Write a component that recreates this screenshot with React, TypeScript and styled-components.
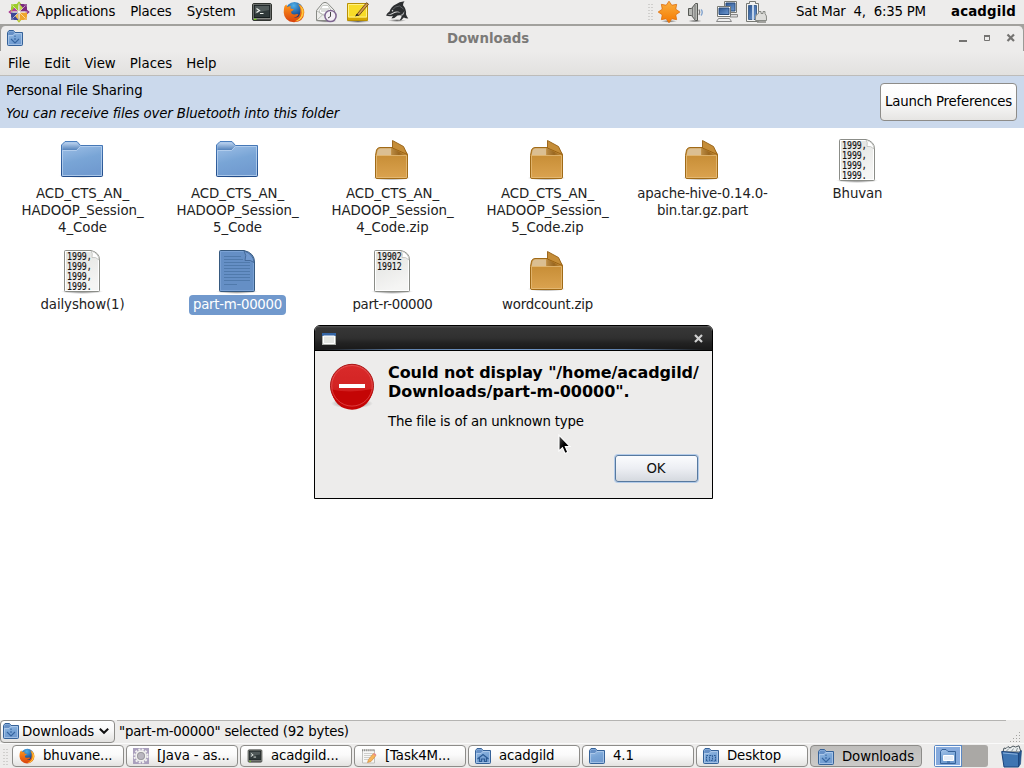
import React from "react";
import styled, { createGlobalStyle, css } from "styled-components";

const Global = createGlobalStyle`
  * { box-sizing: border-box; }
  html, body { margin: 0; padding: 0; }
  body {
    font-family: "DejaVu Sans", sans-serif;
    font-size: 13.33px;
    color: #1a1a1a;
    overflow: hidden;
    background: #fff;
  }
  svg { display: block; flex: none; overflow: visible; }
`;

const Desktop = styled.div`
  position: relative;
  width: 1024px;
  height: 768px;
  display: flex;
  flex-direction: column;
  overflow: hidden;
  background: #fff;
  cursor: default;
  white-space: nowrap;
`;

const Text = styled.span<{ $sp?: number; $bold?: boolean; $italic?: boolean }>`
  display: block;
  white-space: pre;
  letter-spacing: ${(p) => p.$sp ?? 0}px;
  font-weight: ${(p) => (p.$bold ? 700 : 400)};
  font-style: ${(p) => (p.$italic ? "italic" : "normal")};
`;

/* top panel */
const TopPanel = styled.header`
  display: flex;
  justify-content: space-between;
  height: 26px;
  flex: none;
  background: #edeceb;
  border-bottom: 2px solid #a2a19d;
  line-height: 23px;
  color: #000;
`;
const PanelLeft = styled.div`
  display: flex;
  align-items: flex-start;
  padding-left: 8px;
  svg { margin-top: 1px; }
`;
const PanelMenu = styled.nav`
  display: flex;
  gap: 15px;
  padding-left: 6px;
  width: 207px;
`;
const Launchers = styled.div`
  display: flex;
  gap: 10px;
  padding-left: 14px;
`;
const PanelRight = styled.div`
  display: flex;
  padding-right: 8px;
`;
const Tray = styled.div`
  display: flex;
  gap: 7px;
  padding: 1px 0 0 4px;
  width: 142px;
`;
const Clock = styled.div`
  width: 155px;
`;
const User = styled.div`
  width: 65px;
`;

/* file manager window */
const TitleWrap = styled.div`
  background: #a2a19d;
  flex: none;
`;
const TitleBar = styled.div`
  display: flex;
  align-items: center;
  height: 25px;
  padding: 0 7px 1px 6px;
  background: #edeceb;
  border: 1px solid #9b9a97;
  border-width: 0 1px;
  border-radius: 5px 5px 0 0;
`;
const Title = styled.div`
  flex: 1;
  text-align: center;
  color: #7b7a78;
  font-weight: 700;
  padding: 1px 3px 0 0;
`;
const MenuBar = styled.nav`
  display: flex;
  gap: 14px;
  height: 25px;
  flex: none;
  padding-left: 8px;
  line-height: 25px;
  color: #000;
  background: linear-gradient(#edeceb, #e2e1df);
  border-bottom: 1px solid #bdbcba;
`;
const InfoBar = styled.section`
  display: flex;
  justify-content: space-between;
  height: 52px;
  flex: none;
  padding: 3px 7px 0 6px;
  background: #cbd9ec;
  color: #000;
`;
const InfoText = styled.div`
  line-height: 23px;
`;
const PrefButton = styled.button`
  width: 137px;
  height: 38px;
  margin-top: 4px;
  padding: 0 0 2px;
  display: flex;
  align-items: center;
  justify-content: center;
  font: inherit;
  color: #000;
  border: 1px solid #8d8c89;
  border-radius: 4px;
  background: linear-gradient(#ffffff, #fbfbfb 45%, #e6e5e3);
`;

const Files = styled.main`
  flex: 1;
  display: grid;
  grid-template-columns: repeat(6, 155px);
  grid-auto-rows: 111px;
  padding: 9px 0 0 5px;
`;
const File = styled.figure`
  margin: 0;
  display: flex;
  flex-direction: column;
  align-items: center;
  svg { margin-right: 1px; }
`;
const Label = styled.figcaption<{ $selected?: boolean }>`
  text-align: center;
  line-height: 17px;
  color: #222;
  ${(p) =>
    p.$selected &&
    css`
      width: 97px;
      height: 20px;
      display: flex;
      justify-content: center;
      margin: -1px 0 0;
      line-height: 19px;
      border-radius: 4px;
      background: #7199cd;
      color: #fff;
    `}
`;

const StatusBar = styled.footer`
  display: flex;
  height: 23px;
  flex: none;
  background: #edeceb;
  line-height: 21px;
  color: #000;
`;
const PathCombo = styled.div`
  width: 115px;
  height: 23px;
  display: flex;
  align-items: center;
  padding: 0 0 1px 2px;
  border: 1px solid #8d8c89;
  border-radius: 4px;
  background: linear-gradient(#fff, #f8f8f8 45%, #e2e1df);
`;
const ComboLabel = styled.div`
  width: 80px;
  padding-left: 3px;
`;
const StatusText = styled.div`
  width: 889px;
  margin-left: 2px;
  padding-left: 2px;
  border-top: 1px solid #b5b4b2;
`;
const Corner = styled.div`
  padding-left: 4px;
`;
const TaskBar = styled.footer`
  display: flex;
  height: 25px;
  flex: none;
  padding: 1px 0 0 3px;
  background: #edeceb;
  border-top: 1px solid #fafafa;
  color: #000;
`;
const Tasks = styled.div`
  display: flex;
  gap: 2px;
  margin-left: 3px;
`;
const Task = styled.div<{ $active?: boolean }>`
  width: 112px;
  height: 22px;
  display: flex;
  align-items: center;
  gap: 8px;
  padding: ${(p) => (p.$active ? "1px 0 0 7px" : "0 0 1px 6px")};
  border: 1px solid #8d8c89;
  border-radius: 4px;
  background: ${(p) =>
    p.$active
      ? "linear-gradient(#bfbebc, #cbcac8)"
      : "linear-gradient(#ffffff, #fafafa 45%, #e4e3e1)"};
`;
const Pager = styled.div`
  display: flex;
  width: 54px;
  height: 22px;
  margin: 0 13px 0 12px;
  border-radius: 3px;
  overflow: hidden;
  background: #aaa8a5;
`;
const ActiveSpace = styled.div`
  width: 28px;
  display: flex;
  align-items: center;
  justify-content: center;
  background: #86aadc;
  border: 1px solid #5b88c4;
  box-shadow: inset 0 0 0 1px #f4f8fd;
`;

/* error dialog */
const Dialog = styled.div`
  position: absolute;
  left: 314px;
  top: 325px;
  width: 399px;
  height: 174px;
  border: 1px solid #000;
  border-radius: 6px 6px 0 0;
  background: #edeceb;
  overflow: hidden;
`;
const DialogTitle = styled.div`
  height: 25px;
  display: flex;
  align-items: center;
  justify-content: space-between;
  padding: 1px 9px 0 7px;
  background:
    linear-gradient(90deg, #1b1b1b 2%, #5f81ab 22%, #7096c6 50%, #5f81ab 78%, #1b1b1b 98%) 0 23px / 100% 1px no-repeat,
    linear-gradient(#555 0, #363636 2px, #303030 12px, #222 17px, #191919);
  border-bottom: 1px solid #000;
`;
const DialogBody = styled.div`
  display: flex;
  padding: 13px 0 0 14px;
  color: #000;
`;
const DialogMessage = styled.div`
  padding-left: 13px;
`;
const DialogHeading = styled.h1`
  margin: -1px 0 0;
  font-size: 16px;
  line-height: 19px;
`;
const DialogDetail = styled.p`
  margin: 13px 0 0;
  line-height: 16px;
`;
const DialogActions = styled.div`
  display: flex;
  justify-content: flex-end;
  padding: 25px 14px 0 0;
`;
const OkButton = styled.button`
  width: 83px;
  height: 27px;
  padding: 0 1px 1px 0;
  font: inherit;
  color: #111;
  border: 1px solid #57799f;
  border-radius: 3px;
  box-shadow: 0 0 0 1px #b3cbe9;
  background: linear-gradient(#fbfcfe, #eceef3 50%, #d5d9df);
`;
const Pointer = styled.div`
  position: absolute;
  left: 558px;
  top: 434px;
`;

/* ---------- drawings ---------- */

const SharedDefs = () => (
  <svg width="0" height="0" style={{ position: "absolute" }} aria-hidden>
    <defs>
      <linearGradient id="folder" x1="0" y1="0" x2="0.3" y2="1">
        <stop offset="0" stopColor="#a6c5ea" />
        <stop offset="0.6" stopColor="#79a5d6" />
        <stop offset="1" stopColor="#719bd0" />
      </linearGradient>
      <linearGradient id="tab" x1="0" y1="0" x2="0" y2="1">
        <stop offset="0" stopColor="#bcd3ef" />
        <stop offset="1" stopColor="#5583bb" />
      </linearGradient>
      <linearGradient id="edge" x1="0" y1="0" x2="0" y2="1">
        <stop offset="0" stopColor="#4b7ebd" />
        <stop offset="1" stopColor="#214c8a" />
      </linearGradient>
      <linearGradient id="box" x1="0" y1="0" x2="0" y2="1">
        <stop offset="0" stopColor="#c1872e" />
        <stop offset="1" stopColor="#dba350" />
      </linearGradient>
      <linearGradient id="hollow" x1="0" y1="0" x2="1" y2="0">
        <stop offset="0" stopColor="#b98a43" />
        <stop offset="0.5" stopColor="#9a6720" />
        <stop offset="1" stopColor="#c58d38" />
      </linearGradient>
      <linearGradient id="paper" x1="0" y1="0" x2="0.4" y2="1">
        <stop offset="0" stopColor="#dfe0dd" />
        <stop offset="1" stopColor="#f5f5f4" />
      </linearGradient>
      <linearGradient id="fox" x1="0" y1="0" x2="0" y2="1">
        <stop offset="0" stopColor="#ff9a1c" />
        <stop offset="1" stopColor="#d8400c" />
      </linearGradient>
      <radialGradient id="globe" cx="0.45" cy="0.2" r="0.7">
        <stop offset="0" stopColor="#4db0ea" />
        <stop offset="1" stopColor="#0c2f78" />
      </radialGradient>
      <linearGradient id="sun" x1="0" y1="0" x2="0" y2="1">
        <stop offset="0" stopColor="#fbb040" />
        <stop offset="1" stopColor="#f57900" />
      </linearGradient>
      <linearGradient id="screen" x1="0" y1="0" x2="1" y2="1">
        <stop offset="0" stopColor="#2c5592" />
        <stop offset="1" stopColor="#6f9bd2" />
      </linearGradient>
      <linearGradient id="pointer" x1="0" y1="0" x2="1" y2="1">
        <stop offset="0" stopColor="#555" />
        <stop offset="0.5" stopColor="#000" />
      </linearGradient>
      <radialGradient id="shade">
        <stop offset="0" stopColor="#000" stopOpacity="0.55" />
        <stop offset="1" stopColor="#000" stopOpacity="0" />
      </radialGradient>
    </defs>
  </svg>
);

const FolderIcon = () => (
  <svg width="48" height="48" viewBox="0 0 48 48">
    <ellipse cx="24" cy="38.5" rx="23" ry="2.4" fill="url(#shade)" />
    <path d="M3.5 38.5V8L7 4.5h12L22.5 8.5H44.5V38.5Q44.5 39.5 43.5 39.5H4.5Q3.5 39.5 3.5 38.5Z" fill="url(#folder)" stroke="url(#edge)" />
    <path d="M4.5 13V8.5L7.5 5.5h11L22 9.5 18.5 13Z" fill="url(#tab)" />
    <path d="M4.5 38.5V13.5H18.5L22.5 9.5H43.5V38.5Z" fill="none" stroke="#bcd4f0" strokeOpacity="0.75" />
  </svg>
);

const PackageIcon = () => (
  <svg width="48" height="48" viewBox="0 0 48 48">
    <ellipse cx="23.5" cy="41" rx="19" ry="2.5" fill="url(#shade)" />
    <path d="M7.5 18.5 8.5 13Q9.5 10.5 12 10.5H34.5L39.5 17.5V40Q39.5 41.5 38 41.5H9Q7.5 41.5 7.5 40Z" fill="url(#box)" stroke="#a06a17" />
    <path d="M8.5 18.2 9.5 13.5Q10.5 11.2 12.5 11.2H23.3V18.2Z" fill="#dbbf92" />
    <path d="M23.5 18.2V11L38.5 18.2Z" fill="url(#hollow)" />
    <path d="M24.5 3.5 35.5 9.5 39.3 17.5 24.5 11Z" fill="#c58d38" stroke="#955f12" strokeWidth="0.9" />
    <path d="M8.5 18.5H38.5V40.5H8.5Z" fill="none" stroke="#e5bd7c" strokeOpacity="0.75" />
  </svg>
);

const PaperIcon = ({ lines }: { lines: string[] }) => (
  <svg width="48" height="48" viewBox="0 0 48 48">
    <ellipse cx="24" cy="43.5" rx="21" ry="2.5" fill="url(#shade)" />
    <path d="M7.5 2.5H33Q41.5 4.500 41.5 12V42.5Q41.5 43.5 40.5 43.5H7.5Q6.5 43.5 6.5 42.5V3.5Q6.5 2.5 7.5 2.5Z" fill="url(#paper)" stroke="#8b8d88" />
    <path d="M7.5 42.5V3.5H33Q40.5 5.5 40.5 12V42.5Z" fill="none" stroke="#fff" />
    <path d="M33 3Q35 5 34 9.5 38 8.5 41 12 40.5 5 33 3Z" fill="#fff" stroke="#b5b6b2" strokeWidth="0.7" />
    <g fontFamily="DejaVu Sans Mono" fontSize="9.6" fill="#111" stroke="#111" strokeWidth="0.15">
      {lines.map((line, i) => (
        <text key={i} x="9" y={12 + i * 10} textLength={line.length * 4.95} lengthAdjust="spacingAndGlyphs">
          {line}
        </text>
      ))}
    </g>
  </svg>
);

const SelectedDocIcon = () => (
  <svg width="48" height="48" viewBox="0 0 48 48">
    <ellipse cx="24" cy="43.5" rx="21" ry="2.5" fill="url(#shade)" />
    <path d="M7.5 2.5H31Q41.5 5 41.5 14V42.5Q41.5 43.5 40.5 43.5H7.5Q6.5 43.5 6.5 42.5V3.5Q6.5 2.5 7.5 2.5Z" fill="#658fc5" stroke="#36597f" />
    <path d="M7.5 42.5V3.5H31Q40.5 6 40.5 14V42.5Z" fill="none" stroke="#7ba2d5" />
    <path d="M11 8.5H28M11 11.5H30M11 14.5H37M11 17.5H37M11 20.5H37M11 23.5H37M11 26.5H37M11 29.5H37M11 32.5H37M11 36.5H24" stroke="#507aac" />
    <path d="M31 3Q34 7 32 12.5 38 11.5 41 14.5 40.5 6 31 3Z" fill="#7199cf" stroke="#3d6291" strokeWidth="0.8" />
  </svg>
);

type Mark = "down" | "home" | "desk" | "none";
const SmallFolder = ({ mark = "none" }: { mark?: Mark }) => (
  <svg width="16" height="16" viewBox="0 0 16 16">
    <path d="M.5 14.5V2.5L2 .5H6.5L8 2.5H15.5V14.5Q15.5 15.5 14.5 15.5H1.5Q.5 15.5 .5 14.5Z" fill="url(#folder)" stroke="#356299" />
    <path d="M1.3 5V2.8L2.3 1.6H6.2L7.5 3.2 6 5Z" fill="#6690c6" />
    <path d="M1.5 14.5V5.5H6L8 3.5H14.5V14.5Z" fill="none" stroke="#c0d6f0" strokeOpacity="0.6" />
    {mark === "down" && <path d="M8 5.5V7M8 8V10M4 9 8 13 12 9" fill="none" stroke="#3665a0" strokeWidth="1.1" />}
    {mark === "home" && <path d="M2.5 11 8 6.5 13.5 11M4.5 10V13.5H6.5V11H9.5V13.5H11.5V10" fill="none" stroke="#2b5a94" strokeWidth="1.2" />}
    {mark === "desk" && <path d="M5 7.5H3.5V13H5M11 7.5H12.5V13H11M6.5 7.5H9.5V12.5H6.5Z" fill="none" stroke="#2b5a94" strokeDasharray="1.8 .8" />}
  </svg>
);

const DistroLogo = () => (
  <svg width="22" height="22" viewBox="0 0 22 22">
    <path d="M11 .3 14.5 4.5H7.5Z" fill="#9ccd2a" />
    <path d="M21.7 11 17.5 14.5V7.5Z" fill="#8b2a86" />
    <path d="M11 21.7 7.5 17.5H14.5Z" fill="#b5c52c" />
    <path d="M.3 11 4.5 7.5V14.5Z" fill="#a9348d" />
    <path d="M3 3H10.5V10.5H3Z" fill="#9ccd2a" />
    <path d="M11.5 3H19V10.5H11.5Z" fill="#7c2c7e" />
    <path d="M3 11.5H10.5V19H3Z" fill="#3c4796" />
    <path d="M11.5 11.5H19V19H11.5Z" fill="#f0a52b" />
    <path d="M3 10.5 10.5 10.5 6.5 6.5Z" fill="#b5429a" />
    <path d="M11.5 3V10.5L15 7Z" fill="#c5d94a" />
    <path d="M10.5 19V11.5L7 15Z" fill="#f0b94f" />
    <path d="M11 2.5V19.5M2.5 11H19.5" stroke="#edeceb" strokeWidth="0.8" />
    <path d="M5 5 17 17M17 5 5 17" stroke="#fff" strokeWidth="0.8" strokeOpacity="0.7" />
    <path d="M3 6.5 6.5 3H3ZM19 6.5 15.5 3H19ZM3 15.5 6.5 19H3ZM19 15.5 15.5 19H19Z" fill="#edeceb" fillOpacity="0.3" />
  </svg>
);

const TerminalIcon = ({ size = 22 }: { size?: number }) => (
  <svg width={size} height={size} viewBox="0 0 22 22">
    <rect x="1.5" y="2.5" width="19" height="17" rx="1.5" fill="#babdb6" stroke="#30332f" />
    <rect x="3" y="4" width="16" height="12.5" fill="#30393a" stroke="#151b1c" />
    <path d="M4 5H18V9Q10 10 4 13Z" fill="#606868" fillOpacity="0.7" />
    <path d="M5.500 7.5 8.5 9.5 5.5 11.5M9 12.5H12.5" fill="none" stroke="#eef2ee" strokeWidth="1.2" />
    <path d="M2 18.3H20" stroke="#555" strokeWidth="1.6" />
    <path d="M3 18.3H5.5" stroke="#73d216" strokeWidth="1.2" />
  </svg>
);

const FirefoxIcon = ({ size = 22 }: { size?: number }) => (
  <svg width={size} height={size} viewBox="0 0 22 22">
    <circle cx="11.5" cy="10" r="9" fill="url(#globe)" />
    <path d="M1.4 5.5Q2.3 4.2 3.5 3.5 3.8 5 4.5 6 6 4.8 8 5.3 7 6.5 7.5 7.5L10.8 8.2Q10.5 9.5 8.2 10.5 7.8 13.5 11.5 13.5 14 12.5 15.5 13.3 14.5 16.5 10.5 16.2 16 18 17.2 12 18.2 6.5 15 3 21 5 21.3 11.5 20.8 20.8 11 21.3 1.2 20.5.7 11.5.7 8 1.4 5.5Z" fill="url(#fox)" />
    <path d="M17 4.500Q22 8.5 20.3 14 18 20.5 11.5 20.5 18 18 18.8 12 19 8 17 4.5Z" fill="#ffc83a" />
  </svg>
);

const MailIcon = () => (
  <svg width="22" height="22" viewBox="0 0 22 22">
    <ellipse cx="11" cy="20" rx="11" ry="1.7" fill="url(#shade)" />
    <path d="M1.5 9.5 7.5 2.2Q10 .5 12.5 2.2L19.5 9.5V19.5H1.5Z" fill="#eeeeec" stroke="#888a85" />
    <path d="M4.5 9.5 7.5 4.5H13L16 9.5V12L10.5 15 4.5 12Z" fill="#fff" stroke="#c5c7c2" />
    <path d="M6 8H14M6 10H14M2 19 8.5 13M2 10 10.5 15" stroke="#bcbeb9" />
    <circle cx="15.5" cy="15" r="5.6" fill="#f4eff5" stroke="#7e6590" strokeWidth="1.5" />
    <path d="M15.5 11V15.5L13 17" fill="none" stroke="#444" />
  </svg>
);

const NoteIcon = () => (
  <svg width="29" height="22" viewBox="0 0 29 22">
    <ellipse cx="11" cy="20.5" rx="12" ry="1.5" fill="url(#shade)" />
    <path d="M.5 2.5H20.5V19.5H.5Z" fill="#f8dc28" stroke="#b99004" />
    <path d="M1 16.5H20V19H1Z" fill="#d6a700" />
    <path d="M1.5 3.5H19.5V16H1.5Z" fill="none" stroke="#fff184" />
    <path d="M9.5 13.8 19.5 1.7 21.5 3.2 12 14.5Z" fill="#d59a4c" stroke="#6a4817" strokeWidth="0.9" />
    <path d="M8 15.5 9.7 12.8 12 14.3Z" fill="#222" />
  </svg>
);

const DolphinIcon = () => (
  <svg width="24" height="22" viewBox="0 0 24 22">
    <ellipse cx="11" cy="19.5" rx="9" ry="1.5" fill="url(#shade)" />
    <path d="M0 14.5Q1 12 3.5 10.5 5 5.5 10 3.3 13 .8 18.5 .2 16.7 2.2 17 4.3 20.5 8 20 13.2 20.5 15 22.3 17.5 19.5 17.5 17.8 16.5 16 19 13.5 19.5 15.5 17 15.8 14.5 13.5 14 11.5 14.5 9.5 17 5.5 17.5 6.5 15.5 7 14.8 3.5 16 0 14.5Z" fill="#2c2e30" />
    <path d="M1.5 14Q5.5 14.3 8.5 12 11.5 10.5 14.5 11.8 11 9.3 6.500 12 4.5 13.2 1.5 14Z" fill="#dcdcdc" />
    <path d="M14 14.200Q17 13 18.500 10 18.500 13 16.500 14.500Z" fill="#a5a7a8" />
    <path d="M6.5 8.500Q9.5 5 13.5 5L17.5 8" fill="none" stroke="#6b6f71" strokeWidth="0.8" />
    <circle cx="6.5" cy="9.7" r=".8" fill="#ddd" />
  </svg>
);

const sunPoints = Array.from({ length: 16 }, (_, i) => {
  const r = i % 2 ? 7.3 : 10.8;
  const a = (i * Math.PI) / 8;
  return `${(11 + r * Math.sin(a)).toFixed(2)},${(11 - r * Math.cos(a)).toFixed(2)}`;
}).join(" ");

const UpdateIcon = () => (
  <svg width="22" height="22" viewBox="0 0 22 22">
    <ellipse cx="11" cy="20.3" rx="8" ry="1.5" fill="url(#shade)" />
    <polygon points={sunPoints} fill="url(#sun)" stroke="#dd6d0a" strokeWidth="0.8" />
  </svg>
);

const VolumeIcon = () => (
  <svg width="22" height="22" viewBox="0 0 22 22">
    <ellipse cx="8" cy="20" rx="7" ry="1.5" fill="url(#shade)" />
    <path d="M1.5 7.5H4.5L8.5 2.5H10.5V19.5H8.5L4.5 14.5H1.5Z" fill="#b7b9b5" stroke="#555753" />
    <path d="M5.5 7V15M8 4V18" stroke="#777" />
    <path d="M12 8.5Q13.5 11 12 14" fill="none" stroke="#777" strokeWidth="1.3" />
    <path d="M14 8.5Q16.5 11 14 14.5" fill="none" stroke="#84a5cf" strokeWidth="1.4" />
  </svg>
);

const NetworkIcon = () => (
  <svg width="22" height="22" viewBox="0 0 22 22">
    <path d="M8.5 .5H20.5V11.5H8.5Z" fill="#f2f2f1" stroke="#777974" />
    <path d="M10 2H19V10H10Z" fill="url(#screen)" stroke="#294b7b" />
    <path d="M14 13.5H21.5V16H14Z" fill="#ddd" stroke="#888" />
    <path d="M1.5 5.5H14.5V15.5H1.5Z" fill="#fff" stroke="#777974" />
    <path d="M3 7H13V13.5H3Z" fill="url(#screen)" stroke="#294b7b" />
    <path d="M2.5 17.5H13.5L15.5 20.5H.5Z" fill="#eee" stroke="#888" />
  </svg>
);

const PowerIcon = () => (
  <svg width="22" height="22" viewBox="0 0 22 22">
    <path d="M4.5 .5H10.5V2.5H13.5V20.5H1.5V2.5H4.5Z" fill="#f3f3f2" stroke="#777974" />
    <path d="M3.5 4.5H11.5V18.5H3.5Z" fill="url(#screen)" stroke="#43658f" />
    <path d="M8 4V19" stroke="#c1d3ea" strokeWidth="2" />
    <path d="M10.5 19.5V16Q10.5 13.5 13.5 12.5V10.5H16V12.5H18V10.5H20V12.5Q22 14 21.5 19.5Z" fill="#ddddda" stroke="#888a85" />
    <path d="M12 21H21" stroke="#888a85" strokeWidth="1.5" />
  </svg>
);

const Grip = () => (
  <svg width="6" height="22" viewBox="0 0 6 22">
    <path d="M1 4V20M4 4V20" stroke="#b3b2af" strokeDasharray="1 2" />
  </svg>
);

const WindowControls = () => (
  <svg width="60" height="16" viewBox="0 0 60 16">
    <path d="M3 11H11" stroke="#747371" strokeWidth="2" />
    <path d="M28.5 5.5H33.5V10.5H28.5Z" fill="none" stroke="#747371" />
    <path d="M28 6H34" stroke="#747371" strokeWidth="2" />
    <path d="M51.5 4.5 58 11M58 4.5 51.5 11" stroke="#747371" strokeWidth="2.2" />
  </svg>
);

const ErrorIcon = () => (
  <svg width="46" height="48" viewBox="0 0 46 48">
    <defs>
      <linearGradient id="err" x1="0" y1="0" x2="0" y2="1">
        <stop offset="0" stopColor="#d92a2a" />
        <stop offset="0.5" stopColor="#d32424" />
        <stop offset="1" stopColor="#c90d0d" />
      </linearGradient>
    </defs>
    <ellipse cx="23" cy="39.5" rx="21" ry="5" fill="url(#shade)" />
    <circle cx="23" cy="21.800" r="21.5" fill="url(#err)" stroke="#a91515" />
    <path d="M2.500 25.5Q22 29.5 43.5 25A20.5 20.5 0 0 1 2.500 25.5Z" fill="#c40505" />
    <circle cx="23" cy="21.800" r="20.3" fill="none" stroke="#ef6767" strokeOpacity="0.55" />
    <rect x="10" y="20" width="26" height="4" fill="#fff" />
  </svg>
);

const EditorIcon = () => (
  <svg width="16" height="16" viewBox="0 0 16 16">
    <path d="M1.5 2H13.5V15H1.5Z" fill="#f7f7f6" stroke="#c0c0bd" />
    <path d="M1 2.3H14" stroke="#8a8a87" strokeWidth="2" strokeDasharray="1 .9" />
    <path d="M3 5.5H12M3 7.5H11M3 9.5H9M3 11.5H7" stroke="#cfcfcc" />
    <path d="M6.5 14.5 7.5 11.5 12.5 5.5 15 7.5 10 13.5Z" fill="#f7b65a" stroke="#c98335" strokeWidth="0.6" />
    <path d="M12 6.2 13.5 5 15.3 6.5 14.3 8Z" fill="#e98c8c" />
  </svg>
);

const GearIcon = () => (
  <svg width="16" height="16" viewBox="0 0 16 16">
    <rect width="16" height="16" fill="#aaa0bd" />
    <circle cx="8" cy="8" r="6.5" fill="none" stroke="#f1f1ef" strokeWidth="2" strokeDasharray="2 1.4" />
    <circle cx="8" cy="8" r="4.8" fill="#a9a9a9" stroke="#f1f1ef" strokeWidth="1.7" />
    <circle cx="8" cy="8" r="3.6" fill="#b9b6bf" stroke="#8b8a90" strokeWidth=".6" />
  </svg>
);

const TrashIcon = () => (
  <svg width="22" height="23" viewBox="0 0 22 23">
    <path d="M2 7 3 3 5 3.5 7 1.5 9 3 12 1 14.5 2 18 .8 20 7Z" fill="#e9edee" stroke="#4b565d" />
    <path d="M5 6.5 8 3.5M10 7 12.5 3.5M15 7 16.5 3" stroke="#8a9499" />
    <path d="M.7 6.5 17.5 8V22H3Z" fill="#3f75b2" stroke="#1c447c" />
    <path d="M17.5 8 20.5 5.5 19.5 19 17.5 22Z" fill="#255691" stroke="#1c447c" strokeWidth="0.6" />
    <path d="M2 8 16.5 9.3" stroke="#8db4df" />
  </svg>
);

const ResizeGrip = () => (
  <svg width="11" height="23" viewBox="0 0 11 23">
    <path d="M9 12.5H10M6 15.5H7M9 15.5H10M3 18.5H4M6 18.5H7M9 18.5H10M0 21.5H1M3 21.5H4M6 21.5H7M9 21.5H10" stroke="#a3a29f" />
  </svg>
);

/* ---------- content ---------- */

type FileEntry = {
  icon: React.ReactNode;
  lines: string[];
  sp: number;
  selected?: boolean;
};

const files: FileEntry[] = [
  { icon: <FolderIcon />, lines: ["ACD_CTS_AN_", "HADOOP_Session_", "4_Code"], sp: -0.03 },
  { icon: <FolderIcon />, lines: ["ACD_CTS_AN_", "HADOOP_Session_", "5_Code"], sp: -0.03 },
  { icon: <PackageIcon />, lines: ["ACD_CTS_AN_", "HADOOP_Session_", "4_Code.zip"], sp: -0.03 },
  { icon: <PackageIcon />, lines: ["ACD_CTS_AN_", "HADOOP_Session_", "5_Code.zip"], sp: -0.03 },
  { icon: <PackageIcon />, lines: ["apache-hive-0.14.0-", "bin.tar.gz.part"], sp: -0.18 },
  { icon: <PaperIcon lines={["1999,", "1999,", "1999,", "1999."]} />, lines: ["Bhuvan"], sp: -0.1 },
  { icon: <PaperIcon lines={["1999,", "1999,", "1999,", "1999."]} />, lines: ["dailyshow(1)"], sp: -0.1 },
  { icon: <SelectedDocIcon />, lines: ["part-m-00000"], sp: -0.28, selected: true },
  { icon: <PaperIcon lines={["19902", "19912"]} />, lines: ["part-r-00000"], sp: -0.33 },
  { icon: <PackageIcon />, lines: ["wordcount.zip"], sp: -0.22 },
];

const tasks: { icon: React.ReactNode; label: string; active?: boolean }[] = [
  { icon: <FirefoxIcon size={16} />, label: "bhuvane..." },
  { icon: <GearIcon />, label: "[Java - as..." },
  { icon: <TerminalIcon size={16} />, label: "acadgild..." },
  { icon: <EditorIcon />, label: "[Task4M..." },
  { icon: <SmallFolder mark="home" />, label: "acadgild" },
  { icon: <SmallFolder />, label: "4.1" },
  { icon: <SmallFolder mark="desk" />, label: "Desktop" },
  { icon: <SmallFolder mark="down" />, label: "Downloads", active: true },
];

export default function App() {
  return (
    <Desktop>
      <Global />
      <SharedDefs />
      <TopPanel>
        <PanelLeft>
          <DistroLogo />
          <PanelMenu>
            <Text $sp={-0.19}>Applications</Text>
            <Text $sp={-0.15}>Places</Text>
            <Text $sp={-0.1}>System</Text>
          </PanelMenu>
          <Launchers>
            <TerminalIcon />
            <FirefoxIcon />
            <MailIcon />
            <NoteIcon />
            <DolphinIcon />
          </Launchers>
        </PanelLeft>
        <PanelRight>
          <Grip />
          <Tray>
            <UpdateIcon />
            <VolumeIcon />
            <NetworkIcon />
            <PowerIcon />
          </Tray>
          <Clock>
            <Text $sp={-0.24}>{"Sat Mar  4,  6:35 PM"}</Text>
          </Clock>
          <User>
            <Text $bold $sp={0.15}>acadgild</Text>
          </User>
        </PanelRight>
      </TopPanel>

      <TitleWrap>
        <TitleBar>
          <SmallFolder mark="down" />
          <Title>Downloads</Title>
          <WindowControls />
        </TitleBar>
      </TitleWrap>
      <MenuBar>
        {["File", "Edit", "View", "Places", "Help"].map((m) => (
          <Text key={m}>{m}</Text>
        ))}
      </MenuBar>
      <InfoBar>
        <InfoText>
          <Text $sp={-0.1}>Personal File Sharing</Text>
          <Text $italic $sp={-0.135}>You can receive files over Bluetooth into this folder</Text>
        </InfoText>
        <PrefButton>
          <Text $sp={-0.22}>Launch Preferences</Text>
        </PrefButton>
      </InfoBar>

      <Files>
        {files.map((f, i) => (
          <File key={i}>
            {f.icon}
            <Label $selected={f.selected}>
              {f.lines.map((l) => (
                <Text key={l} $sp={f.sp}>{l}</Text>
              ))}
            </Label>
          </File>
        ))}
      </Files>

      <StatusBar>
        <PathCombo>
          <SmallFolder mark="down" />
          <ComboLabel>
            <Text $sp={-0.12}>Downloads</Text>
          </ComboLabel>
          <svg width="10" height="6" viewBox="0 0 10 6">
            <path d="M.8 .8 5 4.8 9.2 .8" fill="none" stroke="#111" strokeWidth="2" />
          </svg>
        </PathCombo>
        <StatusText>
          <Text $sp={-0.23}>"part-m-00000" selected (92 bytes)</Text>
        </StatusText>
        <Corner>
          <ResizeGrip />
        </Corner>
      </StatusBar>

      <TaskBar>
        <Grip />
        <Tasks>
          {tasks.map((t, i) => (
            <Task key={i} $active={t.active}>
              {t.icon}
              <Text $sp={-0.14}>{t.label}</Text>
            </Task>
          ))}
        </Tasks>
        <Pager>
          <ActiveSpace>
            <svg width="16" height="15" viewBox="0 0 16 15">
              <path d="M.5 14.5V2.5L2 .5H6L8 2.5H15.5V14.5Z" fill="url(#folder)" stroke="#356299" />
              <path d="M3.5 6.5H13.5V11.5H3.5Z" fill="#e7eef7" stroke="#fff" />
              <path d="M7 13H10" stroke="#2b5a94" />
            </svg>
          </ActiveSpace>
        </Pager>
        <TrashIcon />
      </TaskBar>

      <Dialog>
        <DialogTitle>
          <svg width="14" height="12" viewBox="0 0 14 12">
            <path d="M0 0H14V12H0Z" fill="#adb0aa" />
            <path d="M0 0H14V3H0Z" fill="#3465a4" />
            <path d="M1.5 3H12.5V10.5H1.5Z" fill="#e4e6e2" stroke="#fff" />
          </svg>
          <svg width="9" height="9" viewBox="0 0 9 9">
            <path d="M1 1 8 8M8 1 1 8" stroke="#d0d0d0" strokeWidth="2.2" />
          </svg>
        </DialogTitle>
        <DialogBody>
          <ErrorIcon />
          <DialogMessage>
            <DialogHeading>
              <Text $bold $sp={-0.1}>Could not display "/home/acadgild/</Text>
              <Text $bold $sp={-0.03}>Downloads/part-m-00000".</Text>
            </DialogHeading>
            <DialogDetail>
              <Text $sp={-0.17}>The file is of an unknown type</Text>
            </DialogDetail>
          </DialogMessage>
        </DialogBody>
        <DialogActions>
          <OkButton>OK</OkButton>
        </DialogActions>
      </Dialog>

      <Pointer>
        <svg width="14" height="21" viewBox="0 0 14 21">
          <path d="M1 1V17L4.500 13.700 7 19.500 9.800 18.200 7.300 12.500H12Z" fill="url(#pointer)" stroke="#fff" strokeWidth="1.1" />
        </svg>
      </Pointer>
    </Desktop>
  );
}
